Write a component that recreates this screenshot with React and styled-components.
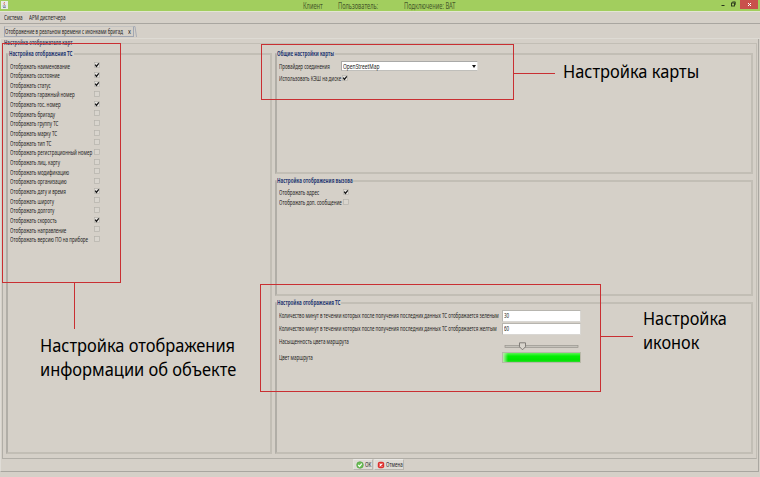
import React from "react";
import styled, { createGlobalStyle } from "styled-components";

const Global = createGlobalStyle`
  * { box-sizing: border-box; }
  html, body { margin: 0; padding: 0; }
  body {
    width: 760px;
    height: 477px;
    overflow: hidden;
    background: #d5d0c8;
    color: #232220;
    font-family: "Noto Sans", "Open Sans", sans-serif;
    font-size: 7px;
    line-height: 10px;
  }
`;

const Window = styled.div`
  position: relative;
  width: 760px;
  height: 477px;
  display: flex;
  flex-direction: column;
  overflow: hidden;
`;

const Narrow = styled.span`
  display: block;
  width: max-content;
  white-space: nowrap;
  transform: scaleX(${(p) => p.$x || 0.642});
  transform-origin: 0 50%;
`;

const TitleBar = styled.header`
  flex: none;
  height: 11px;
  display: grid;
  grid-template-columns: 303px 35px 66px 1fr 10px 9px 18px 2px;
  align-items: start;
  background: #a2ce5e;
  color: #46592a;
  font-size: 8px;
  line-height: 11px;
`;

const AppIcon = styled.svg`
  display: block;
  width: 7px;
  height: 8px;
  margin: 1px 0 0 1px;
`;

const WindowGlyph = styled.svg`
  display: block;
  width: 9px;
  height: 9px;
`;

const CloseButton = styled.div`
  height: 9px;
  display: flex;
  justify-content: center;
  background: #c9504c;
`;

const MenuBar = styled.nav`
  flex: none;
  height: 13px;
  display: grid;
  grid-template-columns: 25px 1fr;
  padding: 1px 0 0 4px;
  border-top: 1px solid #e2e6d2;
  border-bottom: 1px solid #a9a6a0;
`;

const TabStrip = styled.div`
  flex: none;
  height: 15px;
  display: flex;
  padding: 2px 0 0 4px;
  border-bottom: 1px solid #dedbd4;
`;

const Tab = styled.div`
  width: 130px;
  height: 11px;
  display: grid;
  grid-template-columns: 123px 1fr;
  line-height: 9px;
  border: 1px solid #a0a6b2;
  border-top-color: #c3c2c0;
`;

const TabEdge = styled.svg`
  display: block;
  width: 4px;
  height: 11px;
`;

const Workspace = styled.main`
  flex: none;
  width: 759px;
  height: 433px;
  display: flex;
  flex-direction: column;
  padding: 0 1px 0 1px;
  border-right: 1px solid #aaa7a1;
  border-bottom: 1px solid #a9a6a0;
  border-left: 1px solid #dfdcd6;
`;

const Group = styled.fieldset`
  min-width: 0;
  margin: 0;
  padding: 0 0 0 ${(p) => p.$pad ?? 2}px;
  height: ${(p) => p.$h}px;
  border: ${(p) => (p.$outer ? 1 : 2)}px solid #c2beb5;
  border-left-color: #b1aea7;
  border-bottom-color: ${(p) => (p.$outer ? "#b1aea7" : "#c2beb5")};
`;

const Legend = styled.legend`
  display: block;
  width: ${(p) => p.$w}px;
  height: 8px;
  padding: 0;
  margin-left: ${(p) => p.$ml ?? -2}px;
  line-height: 8px;
  font-weight: 700;
  color: ${(p) => (p.$dim ? "#4d4d69" : "#283a72")};
`;

const Columns = styled.div`
  display: grid;
  grid-template-columns: 266px 478px;
  column-gap: 3px;
  padding: 3px 0 0 3px;
`;

const Stack = styled.div`
  display: flex;
  flex-direction: column;
  gap: ${(p) => p.$gap || 0}px;
`;

const OptionList = styled.div`
  display: grid;
  grid-auto-rows: ${(p) => p.$pitch}px;
  padding-top: ${(p) => p.$top}px;
`;

const OptionRow = styled.div`
  display: grid;
  grid-template-columns: ${(p) => p.$label}px 1fr;
  line-height: 9px;
`;

const Box = styled.svg`
  display: block;
  width: 6px;
  height: 7px;
  margin-top: 0.5px;
`;

const MapRow = styled.div`
  height: 16px;
  display: grid;
  grid-template-columns: 62px 137px;
  padding-top: 3px;
  line-height: 11px;
`;

const Select = styled.div`
  height: 10px;
  display: flex;
  justify-content: space-between;
  padding: 0 1px;
  line-height: 9px;
  background: #fff;
  border: 1px solid #aaaaa8;
  border-right-color: #e4e2de;
  border-bottom-color: #c0bfbb;
`;

const Arrow = styled.svg`
  width: 4px;
  height: 3px;
  margin-top: 3px;
`;

const FieldList = styled.div`
  display: flex;
  flex-direction: column;
  padding-top: 3px;
`;

const FieldRow = styled.div`
  height: ${(p) => p.$h}px;
  display: grid;
  grid-template-columns: 223px 79px;
  line-height: 12px;
`;

const Field = styled.div`
  height: 12px;
  padding-left: 1px;
  line-height: 10px;
  background: #fff;
  border: 1px solid #b7b5af;
  border-right-color: #d9d7d3;
  border-bottom-color: #d9d7d3;
`;

const Slider = styled.svg`
  display: block;
  width: 76px;
  height: 9px;
  margin: 6px 0 0 2px;
`;

const Swatch = styled.div`
  height: 11px;
  border: 1px solid #b8b8a8;
  background: linear-gradient(90deg, #b6f0a8 0, transparent 5px),
    linear-gradient(#5cf556 0, #04ee04 35%, #00e400 80%, #32d832 100%);
`;

const ButtonBar = styled.footer`
  height: 12px;
  display: grid;
  grid-template-columns: 20px 30px;
  column-gap: 1px;
  padding-left: 351px;
`;

const Button = styled.div`
  height: 11px;
  display: grid;
  grid-template-columns: 9px 1fr;
  align-items: center;
  padding-left: 2px;
  line-height: 9px;
  background: #dedbd5;
  border: 1px solid #b9b6af;
  border-top-color: #e9e7e3;
  border-left-color: #e3e1dc;
`;

const ButtonIcon = styled.svg`
  display: block;
  width: 8px;
  height: 8px;
`;

const Frame = styled.div`
  position: absolute;
  left: ${(p) => p.$l}px;
  top: ${(p) => p.$t}px;
  width: ${(p) => p.$w}px;
  height: ${(p) => p.$h}px;
  border: 1px solid #c92f32;
`;

const Connector = styled.div`
  position: absolute;
  left: ${(p) => p.$l}px;
  top: ${(p) => p.$t}px;
  width: ${(p) => p.$w || 1}px;
  height: ${(p) => p.$h || 1}px;
  background: #c92f32;
`;

const Note = styled.div`
  position: absolute;
  left: ${(p) => p.$l}px;
  top: ${(p) => p.$t}px;
  font-size: 17.5px;
  line-height: 23.5px;
  color: #000;
`;

function Check({ on }) {
  return (
    <Box viewBox="0 0 6 7">
      <rect x="0.5" y="0.5" width="5" height="5" fill={on ? "#e6e3df" : "#d9d5ce"} stroke="#b5b2ac" strokeWidth="0.7" />
      {on && <path d="M1.2 2.7 L2.4 4.4 L4.8 1.4" fill="none" stroke="#111" strokeWidth="1.2" />}
    </Box>
  );
}

const vehicleOptions = [
  ["Отображать наименование", true],
  ["Отображать состояние", true],
  ["Отображать статус", true],
  ["Отображать гаражный номер", false],
  ["Отображать гос. номер", true],
  ["Отображать бригаду", false],
  ["Отображать группу ТС", false],
  ["Отображать марку ТС", false],
  ["Отображать тип ТС", false],
  ["Отображать регистрационный номер", false],
  ["Отображать лиц. карту", false],
  ["Отображать модификацию", false],
  ["Отображать организацию", false],
  ["Отображать дату и время", true],
  ["Отображать широту", false],
  ["Отображать долготу", false],
  ["Отображать скорость", true],
  ["Отображать направление", false],
  ["Отображать версию ПО на приборе", false],
];

function Options({ items, label, pitch, top }) {
  return (
    <OptionList $pitch={pitch} $top={top}>
      {items.map(([text, on]) => (
        <OptionRow key={text} $label={label}>
          <Narrow>{text}</Narrow>
          <Check on={on} />
        </OptionRow>
      ))}
    </OptionList>
  );
}

export default function App() {
  return (
    <Window>
      <Global />
      <TitleBar>
        <AppIcon viewBox="0 0 7 8">
          <rect width="7" height="8" fill="#e9ece6" />
          <path d="M3.6 1 Q2.4 2.5 3.5 4" fill="none" stroke="#d0705a" strokeWidth="0.9" />
          <path d="M1.6 5 H5 M2 6.5 H4.8" stroke="#71849c" strokeWidth="0.9" />
        </AppIcon>
        <Narrow $x={0.71}>Клиент</Narrow>
        <Narrow $x={0.71}>Пользователь:</Narrow>
        <Narrow $x={0.71}>Подключение: BAT</Narrow>
        <WindowGlyph viewBox="0 0 9 9">
          <path d="M0.5 5.5 H3.5" stroke="#26331a" strokeWidth="1" />
        </WindowGlyph>
        <WindowGlyph viewBox="0 0 9 9">
          <path d="M1.5 2.5 V1.9 H4.3 V4.6 H3.8" fill="none" stroke="#26331a" strokeWidth="0.8" />
          <rect x="0.5" y="3" width="3" height="3" fill="none" stroke="#26331a" strokeWidth="0.9" />
        </WindowGlyph>
        <CloseButton>
          <WindowGlyph viewBox="0 0 9 9">
            <path d="M3 3 L6 6 M6 3 L3 6" stroke="#fff" strokeWidth="1" />
          </WindowGlyph>
        </CloseButton>
      </TitleBar>
      <MenuBar>
        <Narrow $x={0.65}>Система</Narrow>
        <Narrow $x={0.65}>АРМ диспетчера</Narrow>
      </MenuBar>
      <TabStrip>
        <Tab>
          <Narrow $x={0.634}>Отображение в реальном времени с иконками бригад</Narrow>
          <Narrow $x={0.8}>x</Narrow>
        </Tab>
        <TabEdge viewBox="0 0 4 11">
          <path d="M0 0.5 H1 L2.5 11" fill="none" stroke="#a9adb6" />
        </TabEdge>
      </TabStrip>
      <Workspace>
        <Group $outer $pad={0} $h={420}>
          <Legend $w={69} $ml={1} $dim>
            <Narrow $x={0.624}>Настройка отображателя карт</Narrow>
          </Legend>
          <Columns>
            <Group $h={404}>
              <Legend $w={65} $ml={-1}>
                <Narrow $x={0.64}>Настройка отображения ТС</Narrow>
              </Legend>
              <Options items={vehicleOptions} label={84} pitch={9.67} top={3.5} />
            </Group>
            <Stack $gap={3}>
              <Group $h={124}>
                <Legend $w={58}>
                  <Narrow $x={0.637}>Общие настройки карты</Narrow>
                </Legend>
                <Stack>
                  <MapRow>
                    <Narrow $x={0.63}>Провайдер соединения</Narrow>
                    <Select>
                      <Narrow $x={0.7}>OpenStreetMap</Narrow>
                      <Arrow viewBox="0 0 4 3">
                        <path d="M0 0 H4 L2 3 Z" fill="#111" />
                      </Arrow>
                    </Select>
                  </MapRow>
                  <Options items={[["Использовать КЭШ на диске", true]]} label={62.5} pitch={9} top={0} />
                </Stack>
              </Group>
              <Group $h={119}>
                <Legend $w={76}>
                  <Narrow $x={0.645}>Настройка отображения вызова</Narrow>
                </Legend>
                <Options
                  items={[["Отображать адрес", true], ["Отображать доп. сообщение", false]]}
                  label={64}
                  pitch={10}
                  top={3}
                />
              </Group>
              <Group $h={155}>
                <Legend $w={64}>
                  <Narrow $x={0.64}>Настройка отображения ТС</Narrow>
                </Legend>
                <FieldList>
                  <FieldRow $h={13}>
                    <Narrow $x={0.638}>Количество минут в течении которых после получения последних данных ТС отображается зеленым</Narrow>
                    <Field><Narrow>30</Narrow></Field>
                  </FieldRow>
                  <FieldRow $h={13}>
                    <Narrow $x={0.638}>Количество минут в течении которых после получения последних данных ТС отображается желтым</Narrow>
                    <Field><Narrow>60</Narrow></Field>
                  </FieldRow>
                  <FieldRow $h={16}>
                    <Narrow>Насыщенность цвета маршрута</Narrow>
                    <Slider viewBox="0 0 76 9">
                      <rect x="1" y="3.5" width="73" height="2" fill="#c5c2bb" stroke="#98958e" strokeWidth="0.7" />
                      <path d="M15.5 0.8 H21.5 V4.8 L18.5 7.8 L15.5 4.8 Z" fill="#d8d4cc" stroke="#77746f" strokeWidth="0.9" />
                    </Slider>
                  </FieldRow>
                  <FieldRow $h={12}>
                    <Narrow>Цвет маршрута</Narrow>
                    <Swatch />
                  </FieldRow>
                </FieldList>
              </Group>
            </Stack>
          </Columns>
        </Group>
        <ButtonBar>
          <Button>
            <ButtonIcon viewBox="0 0 8 8">
              <circle cx="4" cy="4" r="3.3" fill="#6cbf55" stroke="#4c9a40" strokeWidth="0.6" />
              <path d="M2.2 4 L3.6 5.4 L5.8 2.6" fill="none" stroke="#fff" strokeWidth="1.1" />
            </ButtonIcon>
            <Narrow>OK</Narrow>
          </Button>
          <Button>
            <ButtonIcon viewBox="0 0 8 8">
              <rect x="0.8" y="0.8" width="6.4" height="6.4" rx="2" fill="#dd2f2c" />
              <path d="M2.6 2.6 L5.4 5.4 M5.4 2.6 L2.6 5.4" stroke="#fff" strokeWidth="1.1" />
            </ButtonIcon>
            <Narrow>Отмена</Narrow>
          </Button>
        </ButtonBar>
      </Workspace>

      <Frame $l={2} $t={43} $w={119} $h={240} />
      <Connector $l={74} $t={283} $h={46} />
      <Frame $l={261} $t={44} $w={253} $h={56} />
      <Connector $l={514} $t={73} $w={41} />
      <Frame $l={260} $t={284} $w={341} $h={108} />
      <Connector $l={601} $t={336} $w={32} />
      <Note $l={563} $t={60}>
        <Narrow $x={0.938}>Настройка карты</Narrow>
      </Note>
      <Note $l={643} $t={307}>
        <Narrow $x={0.93}>Настройка</Narrow>
        <Narrow $x={0.93}>иконок</Narrow>
      </Note>
      <Note $l={40} $t={334}>
        <Narrow $x={0.938}>Настройка отображения</Narrow>
        <Narrow $x={0.938}>информации об объекте</Narrow>
      </Note>
    </Window>
  );
}
